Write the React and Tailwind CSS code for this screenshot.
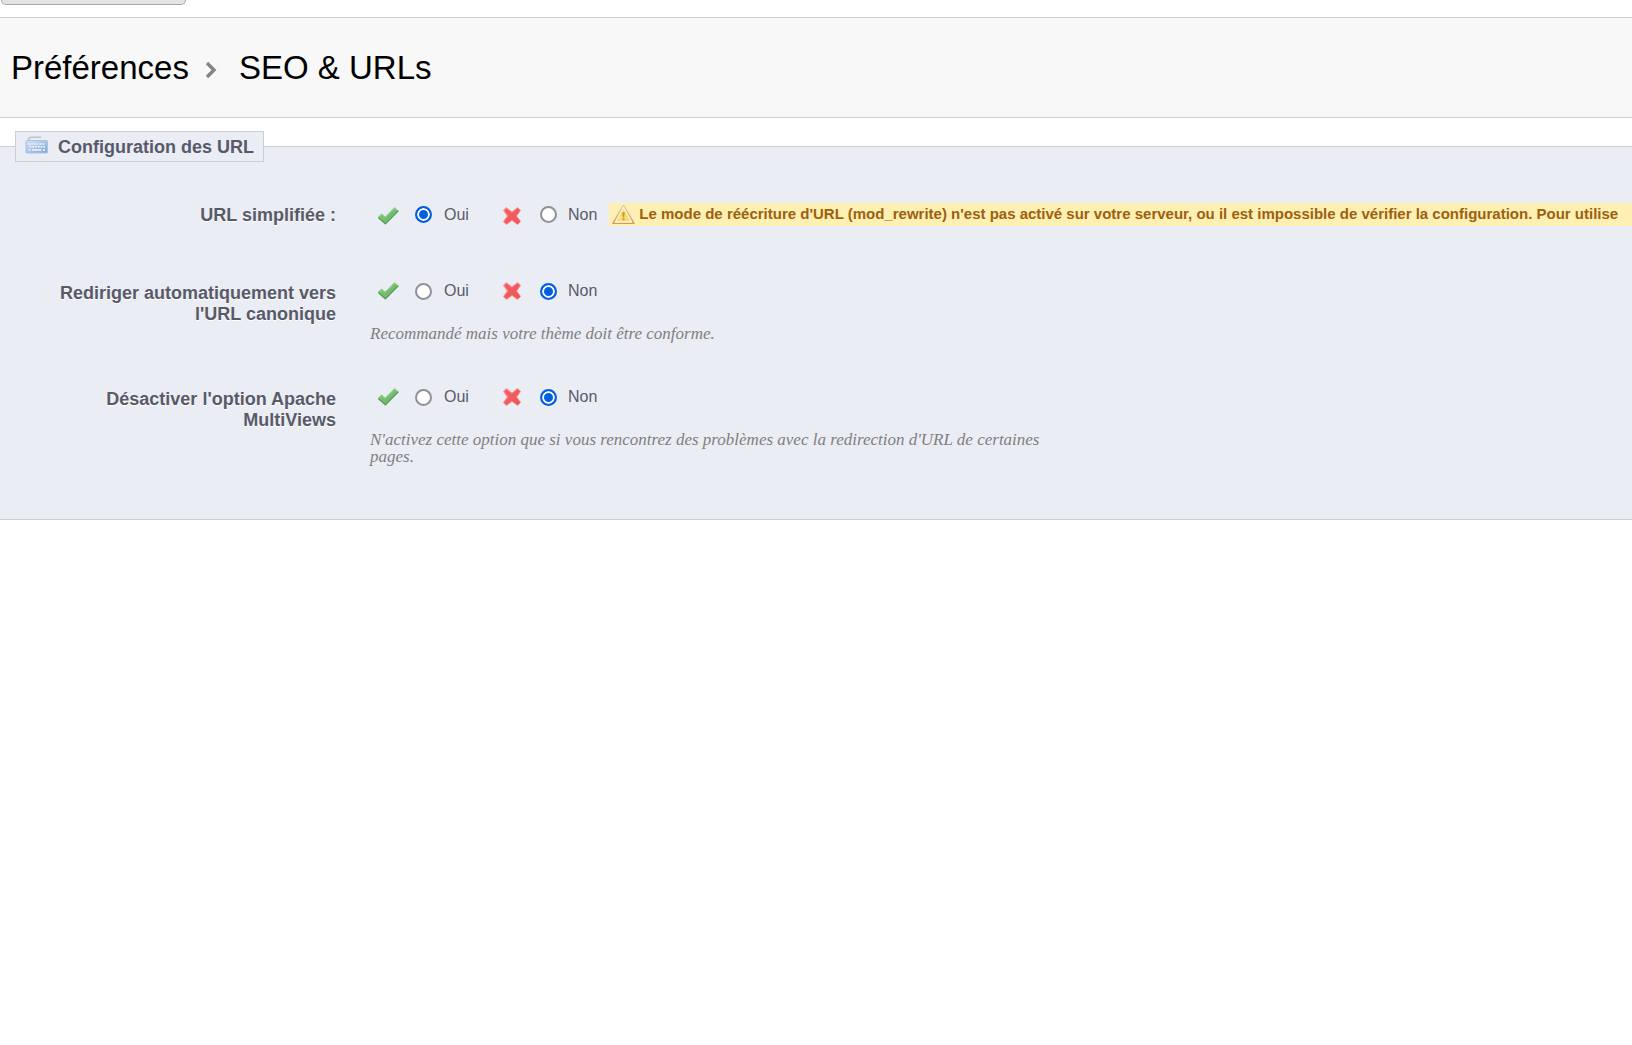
import React from "react";

function CheckIcon() {
  return (
    <svg width="22" height="20" viewBox="0 0 22 20" aria-hidden="true">
      <defs>
        <linearGradient id="leaf" x1="0" y1="0" x2="1" y2="1">
          <stop offset="0" stopColor="#86d080" />
          <stop offset="1" stopColor="#5fae5b" />
        </linearGradient>
      </defs>
      <path d="M1.4 11.4 4.6 8.2 8.2 11.4 17.6 2 20.8 5 8.4 17.6Z" fill="url(#leaf)" stroke="#8cc98a" strokeWidth="1.2" strokeLinejoin="round" />
      <path d="M1.8 12 8.4 17.8 21 5" fill="none" stroke="#56965a" strokeWidth="1.2" strokeLinejoin="round" strokeLinecap="round" />
    </svg>
  );
}

function CrossIcon() {
  return (
    <svg width="20" height="20" viewBox="0 0 20 20" aria-hidden="true">
      <defs>
        <linearGradient id="ruby" x1="0" y1="0" x2="1" y2="1">
          <stop offset="0" stopColor="#f98080" />
          <stop offset="1" stopColor="#e63f3f" />
        </linearGradient>
      </defs>
      <path
        d="M4.2 1.4 10 6 15.6 1.4 18.6 4.4 14.6 10 18.6 15.4 15.6 18.6 10 14.4 4.4 18.6 1.4 15.6 5.4 10 1.4 4.4Z"
        fill="url(#ruby)"
        stroke="#f79a9e"
        strokeWidth="1"
        strokeLinejoin="round"
      />
      <path d="M4.6 4.6 15.4 15.4M15.4 4.6 4.6 15.4" stroke="#f4595b" strokeWidth="3" strokeLinecap="round" />
    </svg>
  );
}

function WarningIcon() {
  return (
    <svg width="23" height="21" viewBox="0 0 23 21" className="shrink-0" aria-hidden="true">
      <defs>
        <linearGradient id="rim" x1="0" y1="0" x2="0" y2="1">
          <stop offset="0" stopColor="#e9cfa6" />
          <stop offset="1" stopColor="#d39a55" />
        </linearGradient>
      </defs>
      <path d="M11.5 1.2 22 19.4H1Z" fill="#fffbea" stroke="url(#rim)" strokeWidth="1.4" strokeLinejoin="round" />
      <path d="M11.5 5.4 18.2 17H4.8Z" fill="#f8df70" stroke="#f6dc80" strokeWidth="0.8" strokeLinejoin="round" />
      <path d="M10.2 8.2h2.6l-.6 5.2h-1.4Z" fill="#c99a2e" />
      <rect x="10.4" y="14.2" width="2.2" height="2" rx="0.8" fill="#c99a2e" />
    </svg>
  );
}

function KeyboardIcon() {
  return (
    <svg width="24" height="18" viewBox="0 0 24 18" className="mb-[3px]" aria-hidden="true">
      <defs>
        <linearGradient id="keys" x1="0" y1="0" x2="1" y2="1">
          <stop offset="0" stopColor="#d3e2f3" />
          <stop offset="1" stopColor="#7fa6d6" />
        </linearGradient>
      </defs>
      <path d="M3.5 5.5V3.5Q4 1.2 6.5 1.2H16" fill="none" stroke="#bfc1c6" strokeWidth="1.4" />
      <rect x="1" y="4.5" width="21.5" height="12.5" rx="1" fill="url(#keys)" stroke="#a9c3e2" />
      <path d="M3.5 8H20M4.5 10.8H20" stroke="#f0f6fd" strokeWidth="1.5" strokeDasharray="1.8 1" />
      <path d="M3.5 14H5.5M7 14H16.4M18 14H20" stroke="#f0f6fd" strokeWidth="1.5" />
    </svg>
  );
}

const radioClass =
  "size-[17px] shrink-0 appearance-none rounded-full border-2 border-[#8f8f9d] bg-white checked:border-[#0060df] checked:bg-[#0060df] checked:shadow-[inset_0_0_0_2px_white]";

function YesNo({ name, value }) {
  return (
    <div className="flex shrink-0 items-center self-stretch pl-[7px] text-base leading-5 text-[#585a69]">
      <label htmlFor={name + "-on"} aria-label="Activer" className="self-end"><CheckIcon /></label>
      <input className={radioClass + " ml-4"} type="radio" id={name + "-on"} name={name} defaultChecked={value} />
      <label htmlFor={name + "-on"} className="ml-3 w-[58px]">Oui</label>
      <label htmlFor={name + "-off"} aria-label="Désactiver" className="self-end"><CrossIcon /></label>
      <input className={radioClass + " ml-[18px]"} type="radio" id={name + "-off"} name={name} defaultChecked={!value} />
      <label htmlFor={name + "-off"} className="ml-[11px]">Non</label>
    </div>
  );
}

function Field({ label, hint, name, value, children }) {
  return (
    <div className="flex min-h-[33px] items-start gap-[34px]">
      <div id={name + "-label"} className="w-[336px] shrink-0 pt-0.5 pl-10 text-right text-lg leading-[21px] font-bold text-[#585a69] [text-shadow:0_1px_0_#fff]">
        {label}
      </div>
      <div role="group" aria-labelledby={name + "-label"} className="min-w-0 flex-1">
        <div className="flex items-center">
          <YesNo name={name} value={value} />
          {children}
        </div>
        {hint && (
          <p className="mt-6 max-w-[670px] font-['Liberation_Serif',serif] text-[17px] leading-[17px] text-[#7f7f7f] italic">{hint}</p>
        )}
      </div>
    </div>
  );
}

export default function App() {
  return (
    <div className="min-h-screen overflow-x-hidden bg-white font-['Liberation_Sans',Arial,sans-serif]">
      <div className="flex h-[17px] items-start px-px">
        <button type="button" aria-label="Menu" className="h-[5px] w-[185px] rounded-b-[5px] border border-t-0 border-[#a8a8a8] bg-[#e3e3e3]" />
      </div>
      <header className="flex h-[101px] items-center border-y border-[#cccccc] bg-[#f8f8f8] pl-[11px]">
        <h1 className="flex items-center text-[33px] leading-10 text-black">
          <span>Préférences</span>
          <svg width="12" height="18" viewBox="0 0 12 18" className="mx-4 mt-1" aria-hidden="true">
            <path d="M2 2 9 9 2 16" fill="none" stroke="#858585" strokeWidth="3.4" />
          </svg>
          <span className="ml-1.5">SEO &amp; URLs</span>
        </h1>
      </header>
      <form className="mt-[13px]">
        <fieldset className="border-b border-[#ccced7] bg-[linear-gradient(to_bottom,white_15px,#ccced7_15px,#ccced7_16px,#ebedf4_16px)] pb-[54px]">
          <legend className="float-left ml-[15px] flex h-[31px] items-center border border-[#ccced7] bg-[#ebedf4] px-[9px] text-lg font-bold text-[#585a69]">
            <KeyboardIcon />
            <span className="ml-[9px]">Configuration des URL</span>
          </legend>
          <div className="clear-both flex flex-col gap-[45px] pt-[41px]">
            <Field name="rewriting" label="URL simplifiée :" value={true}>
              <div className="ml-3 flex h-[23px] min-w-0 flex-1 items-center gap-1 overflow-hidden bg-[#feefb3] pl-[3px] text-[15px] font-bold whitespace-nowrap text-[#9b6110]">
                <WarningIcon />
                Le mode de réécriture d'URL (mod_rewrite) n'est pas activé sur votre serveur, ou il est impossible de vérifier la configuration. Pour utilise
              </div>
            </Field>
            <Field name="canonical" label="Rediriger automatiquement vers l'URL canonique" value={false} hint="Recommandé mais votre thème doit être conforme." />
            <Field name="multiviews" label="Désactiver l'option Apache MultiViews" value={false} hint="N'activez cette option que si vous rencontrez des problèmes avec la redirection d'URL de certaines pages." />
          </div>
        </fieldset>
      </form>
    </div>
  );
}
